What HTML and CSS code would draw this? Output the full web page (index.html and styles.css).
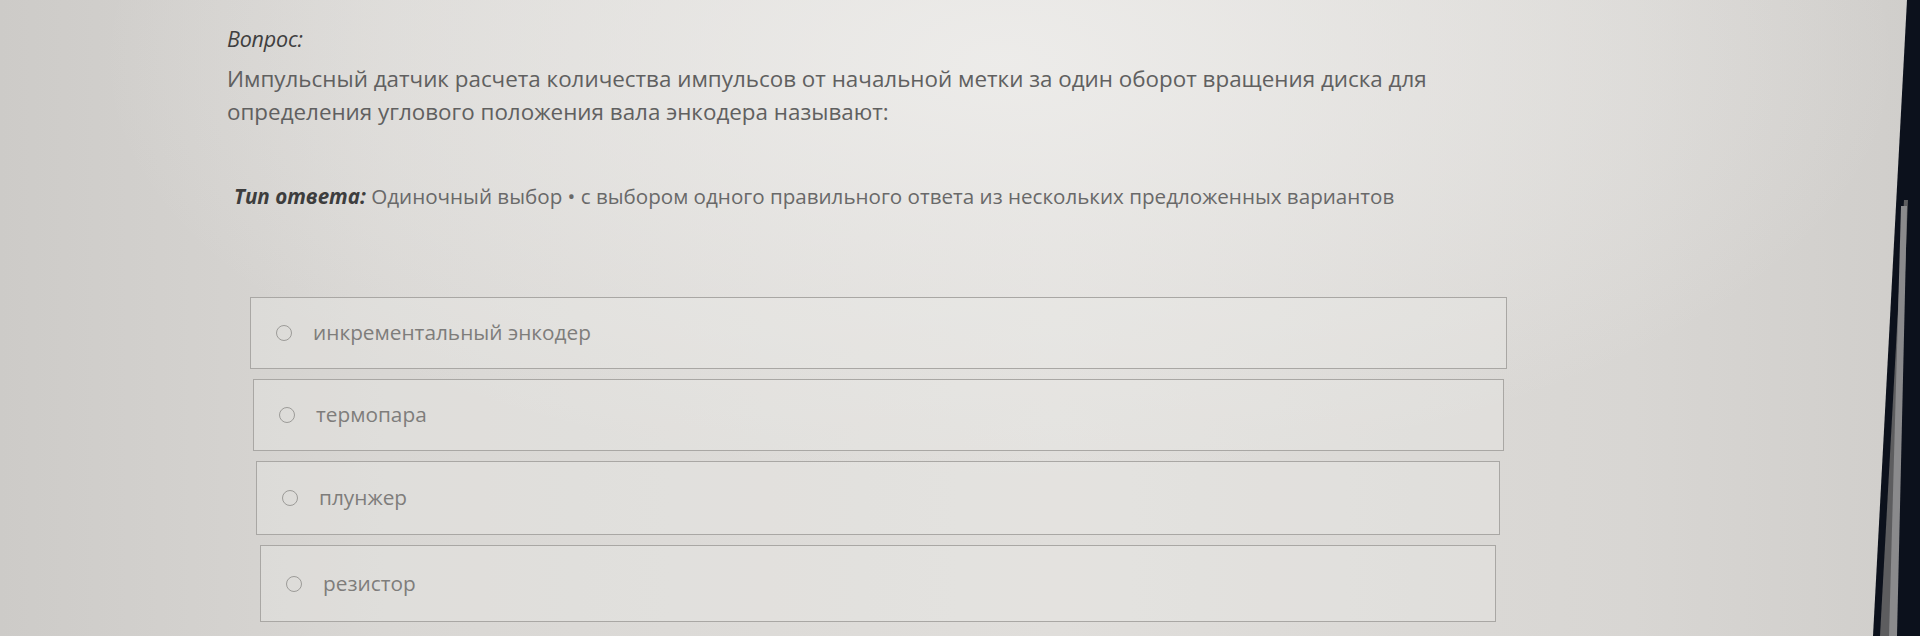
FILE: index.html
```html
<!DOCTYPE html>
<html lang="ru">
<head>
<meta charset="utf-8">
<link rel="stylesheet" href="styles.css">
</head>
<body>
<div class="screen">
  <main class="content">
    <div class="label">Вопрос:</div>
    <div class="question">Импульсный датчик расчета количества импульсов от начальной метки за один оборот вращения диска для определения углового положения вала энкодера называют:</div>
    <div class="type"><span class="type-label">Тип ответа:</span> Одиночный выбор • с выбором одного правильного ответа из нескольких предложенных вариантов</div>
    <div class="options">
      <label class="option o1"><span class="radio"></span><span class="opt-text">инкрементальный энкодер</span></label>
      <label class="option o2"><span class="radio"></span><span class="opt-text">термопара</span></label>
      <label class="option o3"><span class="radio"></span><span class="opt-text">плунжер</span></label>
      <label class="option o4"><span class="radio"></span><span class="opt-text">резистор</span></label>
    </div>
  </main>
  <div class="bezel"><div class="track"></div><div class="thumb"></div></div>
</div>
</body>
</html>
```
FILE: styles.css
```css
html, body {
  margin: 0;
  padding: 0;
  width: 1920px;
  height: 636px;
  overflow: hidden;
}
body {
  font-family: "Open Sans", "Noto Sans", sans-serif;
  background: #dcdad7;
}
.screen {
  position: relative;
  width: 1920px;
  height: 636px;
  background:
    radial-gradient(ellipse 900px 420px at 1000px 60px, rgba(238,237,235,0.9), rgba(238,237,235,0) 100%),
    linear-gradient(90deg, #cdcbc8 0%, #d9d7d4 20%, #e0dedb 55%, #d8d6d3 85%, #d0cecb 100%);
}
.content {
  padding: 24px 0 0 227px;
  width: 1320px;
}
.label {
  font-size: 21.5px;
  font-style: italic;
  color: #3f3f3f;
  line-height: 30px;
  letter-spacing: -0.2px;
}
.question {
  font-size: 22.4px;
  color: #606060;
  line-height: 33px;
  width: 1240px;
  margin-top: 8px;
}
.type {
  margin-top: 53px;
  margin-left: 7px;
  font-size: 20.6px;
  color: #696969;
  line-height: 30px;
}
.type-label {
  font-weight: 700;
  font-style: italic;
  color: #3d3d3d;
}
.options {
  margin-top: 86px;
  display: flex;
  flex-direction: column;
  gap: 10px;
}
.option {
  display: flex;
  align-items: center;
  border: 1.5px solid #a9a7a4;
  box-sizing: border-box;
  background: rgba(235,234,232,0.35);
  padding-left: 25px;
}
.o1 { margin-left: 23px; width: 1257px; height: 72px; }
.o2 { margin-left: 26px; width: 1251px; height: 72px; }
.o3 { margin-left: 29px; width: 1244px; height: 74px; }
.o4 { margin-left: 33px; width: 1236px; height: 77px; }
.radio {
  width: 16px;
  height: 16px;
  border-radius: 50%;
  border: 1.7px solid #9c9b98;
  box-sizing: border-box;
  margin-right: 21px;
  flex: none;
}
.opt-text {
  font-size: 20.8px;
  color: #7e7d7b;
  margin-top: -2px;
}
.bezel {
  position: absolute;
  inset: 0;
  background: #0c111c;
  clip-path: polygon(1907px 0, 1920px 0, 1920px 636px, 1873px 636px);
}
.track {
  position: absolute;
  inset: 0;
  background: #5d5d5f;
  clip-path: polygon(1904px 200px, 1908px 200px, 1890px 636px, 1880px 636px);
}
.thumb {
  position: absolute;
  inset: 0;
  background: #8a8a8c;
  clip-path: polygon(1901px 206px, 1907px 206px, 1897px 636px, 1889px 636px);
}
```
